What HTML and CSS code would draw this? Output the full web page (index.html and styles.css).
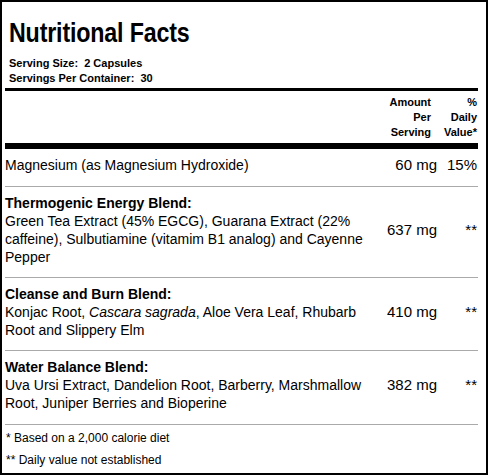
FILE: index.html
```html
<!DOCTYPE html>
<html lang="en">
<head>
<meta charset="utf-8">
<title>Nutritional Facts</title>
<link rel="stylesheet" href="styles.css">
</head>
<body>
<div class="label">
  <header class="head">
    <h1 class="title"><span class="title-text">Nutritional Facts</span></h1>
    <p class="serving">Serving Size:&nbsp; 2 Capsules</p>
    <p class="serving">Servings Per Container:&nbsp; 30</p>
  </header>
  <table class="facts">
    <colgroup>
      <col class="col-desc">
      <col class="col-amt">
      <col class="col-dv">
    </colgroup>
    <thead>
      <tr>
        <th class="h-desc"></th>
        <th class="h-amt">Amount<br>Per<br>Serving</th>
        <th class="h-dv">%<br>Daily<br>Value*</th>
      </tr>
    </thead>
    <tbody>
      <tr class="row row-first">
        <td class="desc">Magnesium (as Magnesium Hydroxide)</td>
        <td class="amt">60 mg</td>
        <td class="dv">15%</td>
      </tr>
      <tr class="row">
        <td class="desc"><strong class="blend">Thermogenic Energy Blend:</strong>Green Tea Extract (45% EGCG), Guarana Extract (22% caffeine), Sulbutiamine (vitamim B1 analog) and Cayenne Pepper</td>
        <td class="amt">637 mg</td>
        <td class="dv">**</td>
      </tr>
      <tr class="row">
        <td class="desc"><strong class="blend">Cleanse and Burn Blend:</strong>Konjac Root, <em class="latin">Cascara sagrada</em>, Aloe Vera Leaf, Rhubarb Root and Slippery Elm</td>
        <td class="amt">410 mg</td>
        <td class="dv">**</td>
      </tr>
      <tr class="row">
        <td class="desc"><strong class="blend">Water Balance Blend:</strong>Uva Ursi Extract, Dandelion Root, Barberry, Marshmallow Root, Juniper Berries and Bioperine</td>
        <td class="amt">382 mg</td>
        <td class="dv">**</td>
      </tr>
    </tbody>
  </table>
  <footer class="notes">
    <p class="note">* Based on a 2,000 calorie diet</p>
    <p class="note">** Daily value not established</p>
  </footer>
</div>
</body>
</html>
```

FILE: styles.css
```css
html, body {
  margin: 0;
  padding: 0;
  background: #fff;
}

body {
  font-family: "Liberation Sans", Arial, sans-serif;
  color: #000;
}

.label {
  box-sizing: border-box;
  width: 488px;
  height: 475px;
  border: 2px solid #000;
  padding: 15px 8px 0 3px;
}

.head {
  padding: 0 0 2px 4px;
  border-bottom: 3px solid #000;
}

.title {
  margin: 0 0 7px 0;
  font-weight: bold;
  font-size: 28px;
  line-height: 32px;
  white-space: nowrap;
}

.title-text {
  display: inline-block;
  transform: scaleX(0.83);
  transform-origin: 0 50%;
  letter-spacing: -0.2px;
}

.serving {
  margin: 0;
  font-size: 11px;
  line-height: 15px;
  font-weight: bold;
}

.facts {
  width: 100%;
  border-collapse: collapse;
  table-layout: fixed;
}

.col-desc { width: 380px; }
.col-amt { width: 52px; }
.col-dv { width: 41px; }

thead th {
  font-size: 11px;
  line-height: 15px;
  font-weight: bold;
  text-align: right;
  padding: 4px 0 3px 0;
  border-bottom: 6px solid #000;
}

.h-amt { padding-right: 6px; }
.h-dv { padding-right: 1px; }

.row td {
  font-size: 14px;
  line-height: 18px;
  padding: 7px 0 11px 0;
  border-top: 1px solid #aaa;
  border-bottom: 1px solid #aaa;
}

.row-first td {
  border-top: 0;
  padding-bottom: 12px;
}

.row:last-child td {
  padding-bottom: 12px;
}

.desc {
  padding-left: 1px;
  text-align: left;
  vertical-align: top;
}

.latin {
  font-style: italic;
}

.row td.amt {
  font-size: 15px;
  text-align: right;
  vertical-align: middle;
  white-space: nowrap;
}

.row td.dv {
  font-size: 15px;
  text-align: right;
  vertical-align: middle;
  padding-right: 1px;
}

.blend {
  display: block;
  font-weight: bold;
}

.notes {
  padding: 2px 0 0 1px;
}

.note {
  margin: 0;
  font-size: 12px;
  line-height: 22px;
}
```
